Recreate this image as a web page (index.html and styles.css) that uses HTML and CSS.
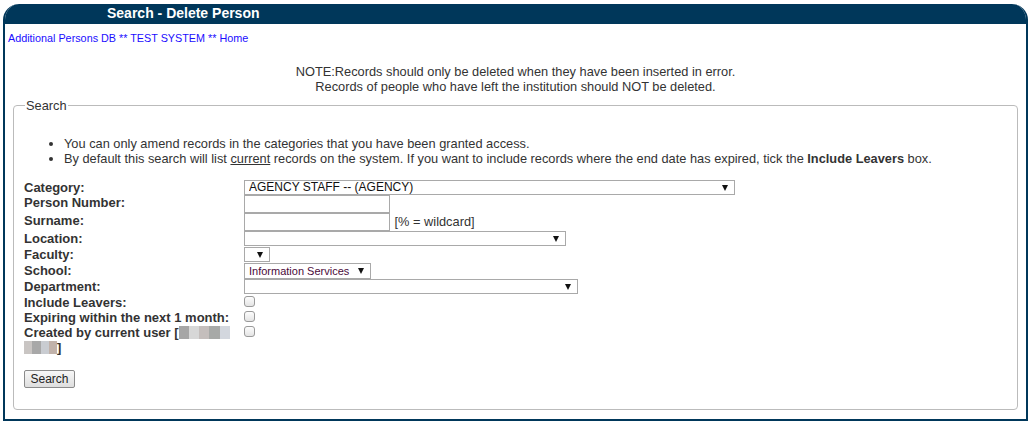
FILE: index.html
```html
<!DOCTYPE html>
<html lang="en">
<head>
    <meta charset="UTF-8">
    <title>Search - Delete Person</title>
    <link rel="stylesheet" href="styles.css">
</head>
<body>
    <div class="page">
        <div class="titlebar">Search - Delete Person</div>
        <div class="crumbs">
            <a href="#">Additional Persons DB ** TEST SYSTEM ** Home</a>
        </div>
        <p class="note">NOTE:Records should only be deleted when they have been inserted in error.<br>
            Records of people who have left the institution should NOT be deleted.</p>

        <fieldset class="search">
            <legend>Search</legend>
            <ul class="hints">
                <li>You can only amend records in the categories that you have been granted access.</li>
                <li>By default this search will list <u>current</u> records on the system. If you want to include records where the end date has expired, tick the <b>Include Leavers</b> box.</li>
            </ul>

            <table class="form">
                <tr class="r-cat">
                    <th>Category:</th>
                    <td><span class="sel w-cat"><select class="big"><option>AGENCY STAFF -- (AGENCY)</option></select></span></td>
                </tr>
                <tr class="r-inp">
                    <th>Person Number:</th>
                    <td><input type="text" class="txt"></td>
                </tr>
                <tr class="r-inp">
                    <th>Surname:</th>
                    <td><input type="text" class="txt"> <span class="hint">[% = wildcard]</span></td>
                </tr>
                <tr class="r-sel">
                    <th>Location:</th>
                    <td><span class="sel w-loc"><select><option></option></select></span></td>
                </tr>
                <tr class="r-sel">
                    <th>Faculty:</th>
                    <td><span class="sel w-fac"><select><option></option></select></span></td>
                </tr>
                <tr class="r-sel">
                    <th>School:</th>
                    <td><span class="sel w-sch"><select class="small"><option>Information Services</option></select></span></td>
                </tr>
                <tr class="r-sel">
                    <th>Department:</th>
                    <td><span class="sel w-dep"><select><option></option></select></span></td>
                </tr>
                <tr class="r-chk">
                    <th>Include Leavers:</th>
                    <td><input type="checkbox" class="chk"></td>
                </tr>
                <tr class="r-chk">
                    <th>Expiring within the next 1 month:</th>
                    <td><input type="checkbox" class="chk"></td>
                </tr>
                <tr class="r-chk r-user">
                    <th>Created by current user [<span class="blur b1"></span><br><span class="blur b2"></span>]</th>
                    <td><input type="checkbox" class="chk"></td>
                </tr>
            </table>

            <button type="button" class="btn">Search</button>
        </fieldset>
    </div>
</body>
</html>
```

FILE: styles.css
```css
body {
    margin: 0;
    padding: 4px 6px 3px 3px;
    font-family: "Liberation Sans", Arial, sans-serif;
    font-size: 12.8px;
    color: #333;
    background: #fff;
}
.page {
    border: 2px solid #00375a;
    border-top: none;
    border-radius: 16px 16px 0 0;
    height: 415px;
    overflow: hidden;
}
.titlebar {
    background-color: #00375a;
    color: #fff;
    font-weight: bold;
    font-size: 14px;
    height: 20px;
    line-height: 19px;
    padding-left: 104px;
    margin: 0 -2px;
    border-radius: 16px 16px 0 0;
}
.crumbs {
    padding: 8px 0 0 3px;
    font-size: 10.8px;
    line-height: 13px;
}
.crumbs a {
    color: #1a0dff;
    text-decoration: none;
}
.note {
    text-align: center;
    margin: 19px 0 0 0;
    line-height: 15px;
}
.search {
    margin: 4px 8px 0 8px;
    padding: 4px 10px 20px 10px;
    border: 1px solid #bbb;
    border-radius: 4px;
    height: 286px;
}
.search legend {
    padding: 0 1px;
    margin-left: 1px;
}
.hints {
    margin: 19px 0 14px 0;
    padding-left: 40px;
    line-height: 15px;
}
.form {
    border-collapse: collapse;
    border-spacing: 0;
}
.form th {
    width: 220px;
    text-align: left;
    vertical-align: middle;
    padding: 0;
    line-height: 15px;
    font-size: 13px;
    font-weight: bold;
    color: #333;
}
.form td {
    padding: 0;
    vertical-align: top;
    line-height: 14px;
}
.r-cat td { height: 14px; }
.r-inp td { height: 18px; }
.r-inp th { padding-bottom: 3px; }
.r-sel td { height: 16px; }
.r-sel th { padding-bottom: 1px; }
.r-chk td { height: 15px; }
.r-user th {
    vertical-align: top;
}
.sel {
    position: relative;
    display: inline-block;
    vertical-align: top;
}
.sel select {
    -webkit-appearance: none;
    appearance: none;
    display: block;
    width: 100%;
    height: 15px;
    border: 1px solid #a9a9a9;
    border-radius: 0;
    background: #fff;
    font-family: "Liberation Sans", Arial, sans-serif;
    font-size: 11px;
    color: #111;
    padding: 0 0 0 4px;
    margin: 0;
    line-height: 13px;
}
.sel select.big {
    font-size: 12px;
}
.sel select.small {
    color: #4a0a3a;
    height: 16px;
}
.sel::after {
    content: "";
    position: absolute;
    right: 7px;
    top: 5px;
    border-left: 3px solid transparent;
    border-right: 3px solid transparent;
    border-top: 6px solid #111;
    pointer-events: none;
}
.w-cat { width: 491px; }
.w-loc { width: 322px; }
.w-fac { width: 26px; }
.w-sch { width: 127px; }
.w-dep { width: 334px; }
.txt {
    width: 146px;
    height: 18px;
    box-sizing: border-box;
    border: 1px solid #a9a9a9;
    margin: 0;
    padding: 0 2px;
    vertical-align: top;
}
.hint {
    display: inline-block;
    line-height: 18px;
    margin-left: 1px;
    color: #333;
}
.chk {
    -webkit-appearance: none;
    appearance: none;
    width: 11px;
    height: 11px;
    margin: 1px 0 0 0;
    border: 1px solid #9a9a9a;
    border-radius: 3px;
    background: linear-gradient(#fdfdfd, #e4e4e4);
    vertical-align: top;
}
.blur {
    display: inline-block;
    height: 13px;
    vertical-align: -2px;
}
.b1 {
    width: 51px;
    background: linear-gradient(90deg, #a6a6a6 0 10px, #d7d7d7 10px 20px, #c4bebc 20px 30px, #a7a9a7 30px 41px, #d3d7de 41px);
}
.b2 {
    width: 33px;
    background: linear-gradient(90deg, #c9c5c3 0 8px, #a8a8a8 8px 17px, #c9ccd1 17px 25px, #c1b2aa 25px);
}
.btn {
    display: block;
    margin-top: 15px;
    width: 51px;
    height: 18px;
    padding: 0;
    font-family: "Liberation Sans", Arial, sans-serif;
    font-size: 12px;
    color: #222;
    border: 1px solid #8a8a8a;
    border-radius: 2px;
    background: linear-gradient(#f7f7f7, #dedede);
}
```
